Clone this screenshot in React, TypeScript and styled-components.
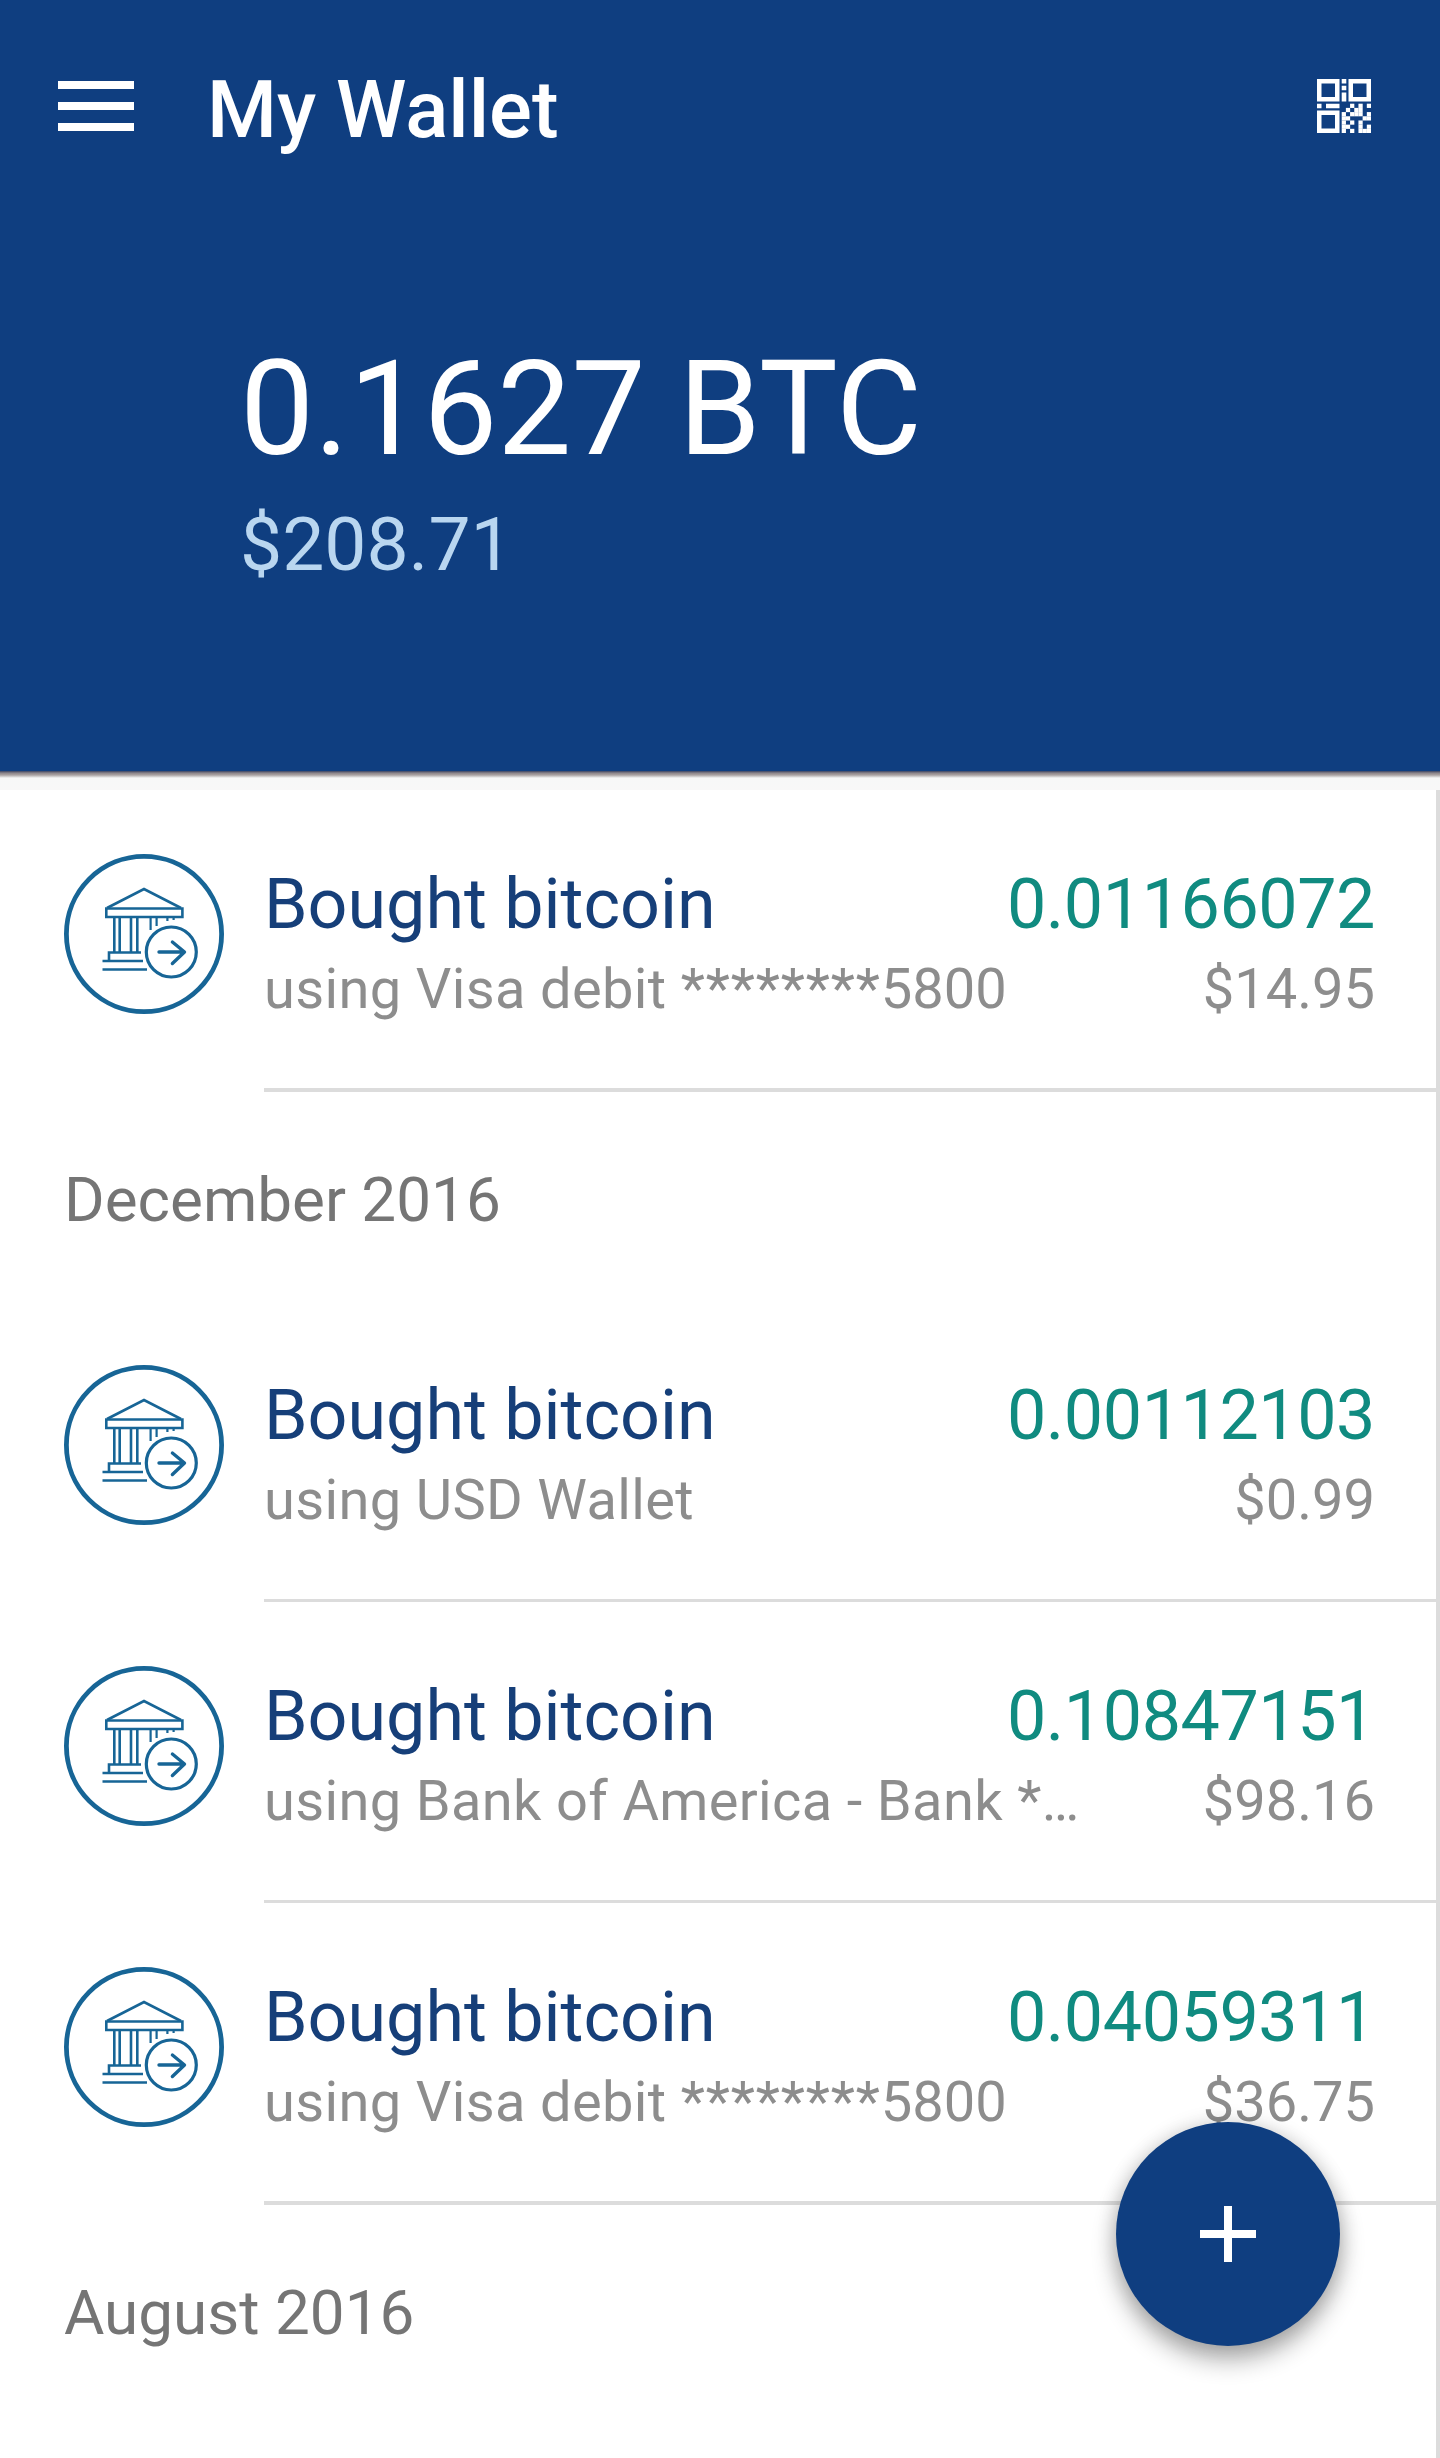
import React from "react";
import styled, { createGlobalStyle } from "styled-components";

const NAVY = "#0f3e80";
const ICON_BLUE = "#176596";

const GlobalStyle = createGlobalStyle`
  *, *::before, *::after { box-sizing: border-box; }
  body { margin: 0; background: #fff; font-family: Roboto, "Liberation Sans", sans-serif; }
`;

const Screen = styled.div`
  position: relative;
  width: 1440px;
  height: 2458px;
  overflow: hidden;
  display: flex;
  flex-direction: column;
  background: #fff;
`;

const Header = styled.header`
  flex: none;
  height: 771px;
  background: ${NAVY};
  color: #fff;
`;

const HeaderEdge = styled.div`
  flex: none;
  height: 19px;
  background: linear-gradient(#3a4464 0, #8b8489 2px, #aaa3a3 4px, #dcdcdc 6px, #f7f8f8 7px, #f8f8f8 100%);
`;

const Toolbar = styled.div`
  display: flex;
  align-items: center;
  height: 212px;
  padding: 0 69px 0 58px;
`;

const MenuButton = styled.button`
  display: flex;
  flex-direction: column;
  gap: 13px;
  width: 76px;
  padding: 0;
  border: 0;
  background: none;
`;

const MenuBar = styled.span`
  height: 8px;
  background: #fff;
`;

const Title = styled.h1`
  flex: 1;
  margin: 7px 0 0 73px;
  font-size: 80px;
  line-height: 94px;
  font-weight: 500;
`;

const Balance = styled.section`
  padding: 119px 0 0 240px;
`;

const BalanceBtc = styled.div`
  font-size: 132px;
  line-height: 156px;
  white-space: nowrap;
`;

const BalanceUsd = styled.div`
  margin-top: 13px;
  font-size: 75px;
  line-height: 88px;
  color: #b9d6f0;
`;

const List = styled.main`
  flex: 1;
  border-right: 4px solid #dcdcdc;
`;

const Row = styled.article<{ $height: number }>`
  display: flex;
  height: ${(p) => p.$height}px;
  padding-left: 64px;
`;

const RowBody = styled.div<{ $rule: number }>`
  flex: 1;
  min-width: 0;
  display: flex;
  flex-direction: column;
  justify-content: flex-end;
  margin-left: 40px;
  padding: 0 61px 56px 0;
  border-bottom: ${(p) => p.$rule}px solid #dcdcdc;
`;

const Line = styled.div`
  display: flex;
  justify-content: space-between;
  white-space: nowrap;
`;

const Name = styled.span`
  font-size: 70px;
  line-height: 84px;
  color: #163f79;
`;

const Amount = styled.span`
  font-size: 70px;
  line-height: 84px;
  letter-spacing: -0.45px;
  color: #108b80;
`;

const Value = styled.span`
  font-size: 56px;
  line-height: 86px;
  color: #8d8d8d;
`;

const Detail = styled(Value)`
  letter-spacing: 0.35px;
`;

const Mask = styled.span`
  letter-spacing: 0.9px;
`;

const Digits = styled.span`
  letter-spacing: 0;
`;

const IconSlot = styled.div<{ $rule: number }>`
  display: flex;
  align-items: flex-end;
  width: 160px;
  padding-bottom: ${(p) => 74 + p.$rule}px;
`;

const Month = styled.h2<{ $height: number }>`
  margin: 0;
  height: ${(p) => p.$height}px;
  padding: 70px 0 0 64px;
  font-size: 62px;
  line-height: 76px;
  font-weight: 400;
  color: #757575;
`;

const Fab = styled.button`
  position: absolute;
  left: 1116px;
  top: 2122px;
  display: grid;
  place-items: center;
  width: 224px;
  height: 224px;
  padding: 0;
  border: 0;
  border-radius: 50%;
  background: ${NAVY};
  box-shadow: 0 14px 24px rgba(0, 0, 0, 0.32), 0 0 20px rgba(0, 0, 0, 0.14);
`;

// Data modules of the lower right quadrant, 4.5px each.
const QR_DATA = [
  "..#.#.#",
  ".#.##..",
  "#.###.#",
  "##...##",
  "#.#.#..",
  "##..#.#",
  "#.#.###",
];

function QrIcon() {
  return (
    <svg width="54" height="54" viewBox="0 0 54 54" fill="#fff">
      <g fill="none" stroke="#fff" strokeWidth="4.5">
        <rect x="2.25" y="2.25" width="18" height="18" />
        <rect x="33.75" y="2.25" width="18" height="18" />
        <rect x="2.25" y="33.75" width="18" height="18" />
      </g>
      <path d="M24.7 0h4.6v4.5h-4.6zM24.7 6.8h4.6v4.5h-4.6zM24.7 13.5h4.6v9h-4.6z" />
      <path d="M0 24.7h4.5v4.6H0zM9 24.7h13.5v4.6H9z" />
      {QR_DATA.flatMap((row, y) =>
        [...row].map((cell, x) =>
          cell === "#" ? (
            <rect key={`${x}-${y}`} x={24.7 + x * 4.186} y={24.7 + y * 4.186} width="4.25" height="4.25" />
          ) : null
        )
      )}
    </svg>
  );
}

function BankIcon() {
  return (
    <svg width="160" height="160" viewBox="0 0 160 160" fill="none" stroke={ICON_BLUE}>
      <circle cx="80" cy="80" r="77.6" strokeWidth="4.8" />
      <g strokeWidth="2.6">
        <path d="M43 54 L80 35 L117 54" />
        <path d="M42.3 54.5H118.4V63H42.3Z" />
        <path d="M50.3 63V98M55.7 63V98M67 63V98M73.3 63V98" />
        <path d="M86.6 63V76M92.6 63V72M103.4 63V67M109.6 63V66" strokeWidth="2.2" />
        <path d="M77 98.5H45V107M38.5 107H79M38.5 115.5H83" />
      </g>
      <circle cx="107.3" cy="98" r="25" strokeWidth="3.2" />
      <path d="M95 98H120M108.4 88L120.5 98L108.4 109.5" strokeWidth="3.4" strokeLinecap="round" strokeLinejoin="round" />
    </svg>
  );
}

interface TransactionProps {
  height: number;
  rule: number;
  amount: string;
  detail: React.ReactNode;
  value: string;
}

function Transaction({ height, rule, amount, detail, value }: TransactionProps) {
  return (
    <Row $height={height}>
      <IconSlot $rule={rule}><BankIcon /></IconSlot>
      <RowBody $rule={rule}>
        <Line><Name>Bought bitcoin</Name><Amount>{amount}</Amount></Line>
        <Line><Detail>{detail}</Detail><Value>{value}</Value></Line>
      </RowBody>
    </Row>
  );
}

const visaDetail = <>using Visa debit <Mask>********</Mask><Digits>5800</Digits></>;

export default function App() {
  return (
    <Screen>
      <GlobalStyle />
      <Header>
        <Toolbar>
          <MenuButton aria-label="Menu"><MenuBar /><MenuBar /><MenuBar /></MenuButton>
          <Title>My Wallet</Title>
          <QrIcon />
        </Toolbar>
        <Balance>
          <BalanceBtc>0.1627 BTC</BalanceBtc>
          <BalanceUsd>$208.71</BalanceUsd>
        </Balance>
      </Header>
      <HeaderEdge />
      <List>
        <Transaction height={302} rule={4} amount="0.01166072" detail={visaDetail} value="$14.95" />
        <Month $height={210}>December 2016</Month>
        <Transaction height={300} rule={3} amount="0.00112103" detail="using USD Wallet" value="$0.99" />
        <Transaction height={301} rule={3} amount="0.10847151" detail="using Bank of America - Bank *…" value="$98.16" />
        <Transaction height={302} rule={4} amount="0.04059311" detail={visaDetail} value="$36.75" />
        <Month $height={210}>August 2016</Month>
      </List>
      <Fab aria-label="Add">
        <svg width="56" height="56" viewBox="0 0 56 56" fill="#fff"><path d="M24 0h8v24h24v8H32v24h-8V32H0v-8h24z" /></svg>
      </Fab>
    </Screen>
  );
}
